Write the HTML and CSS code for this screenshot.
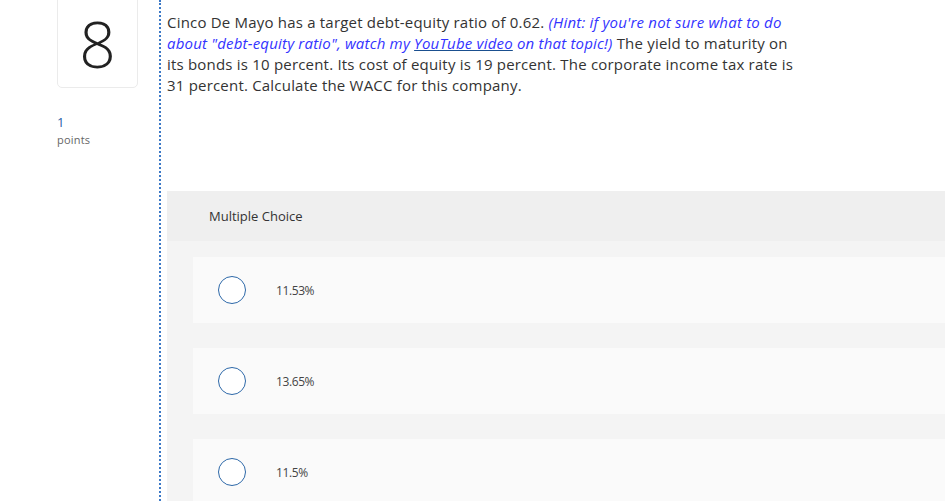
FILE: index.html
```html
<!DOCTYPE html>
<html>
<head>
<meta charset="utf-8">
<link rel="stylesheet" href="styles.css">
</head>
<body>
<div class="page">
  <aside class="side">
    <div class="qnum">8</div>
    <div class="pts">
      <div class="pts-val">1</div>
      <div class="pts-lbl">points</div>
    </div>
  </aside>
  <main class="main">
    <p class="question">Cinco De Mayo has a target debt-equity ratio of 0.62. <em class="hint">(Hint: if you're not sure what to do<br>about "debt-equity ratio", watch my <a class="yt">YouTube video</a> on that topic!)</em> The yield to maturity on<br>its bonds is 10 percent. Its cost of equity is 19 percent. The corporate income tax rate is<br>31 percent. Calculate the WACC for this company.</p>
    <section class="mc">
      <div class="mc-head">Multiple Choice</div>
      <div class="mc-body">
        <div class="opt"><span class="radio"></span><span class="opt-txt">11.53%</span></div>
        <div class="opt"><span class="radio"></span><span class="opt-txt">13.65%</span></div>
        <div class="opt"><span class="radio"></span><span class="opt-txt">11.5%</span></div>
      </div>
    </section>
  </main>
</div>
</body>
</html>
```

FILE: styles.css
```css
html, body {
  margin: 0;
  padding: 0;
  background: #fff;
  height: 100%;
  overflow: hidden;
}
body {
  font-family: "Open Sans", sans-serif;
  color: #333;
}
.page {
  display: flex;
  height: 501px;
}
.side {
  width: 159px;
  flex: none;
  padding-left: 57px;
  box-sizing: border-box;
}
.qnum {
  width: 81px;
  height: 98px;
  margin-top: -10px;
  box-sizing: border-box;
  border: 1px solid #ebebeb;
  border-radius: 5px;
  display: flex;
  align-items: center;
  justify-content: center;
  font-family: "Open Sans", sans-serif;
  font-weight: 300;
  font-size: 64px;
  color: #222;
  padding-top: 8px;
}
.pts {
  margin-top: 27px;
  display: flex;
  flex-direction: column;
  gap: 3px;
}
.pts-val {
  font-size: 13px;
  line-height: 15px;
  color: #2a62a8;
}
.pts-lbl {
  font-size: 11px;
  line-height: 13px;
  color: #666;
  letter-spacing: 0.2px;
}
.main {
  flex: 1;
  border-left: 2px dotted #3b78c6;
  padding-left: 6px;
  min-width: 0;
}
.question {
  margin: 12px 0 0 0;
  white-space: nowrap;
  font-size: 15px;
  letter-spacing: 0.2px;
  line-height: 21px;
  color: #333;
}
.hint {
  color: #3333ff;
}
.yt {
  color: #3333ff;
  text-decoration: underline;
  text-decoration-color: #1a4f8f;
}
.mc {
  margin-top: 95px;
  background: #f4f4f4;
}
.mc-head {
  height: 50px;
  background: #efefef;
  display: flex;
  align-items: center;
  padding-left: 42px;
  font-size: 13px;
  color: #333;
}
.mc-body {
  padding: 16px 0 0 26px;
  display: flex;
  flex-direction: column;
  gap: 25px;
}
.opt {
  height: 66px;
  background: #fafafa;
  display: flex;
  align-items: center;
  padding-left: 25px;
}
.radio {
  width: 28px;
  height: 28px;
  box-sizing: border-box;
  border: 1.5px solid #2d68a8;
  border-radius: 50%;
  background: #fff;
  flex: none;
}
.opt-txt {
  margin-left: 30px;
  font-size: 12px;
  letter-spacing: -0.4px;
  color: #444;
}
```
